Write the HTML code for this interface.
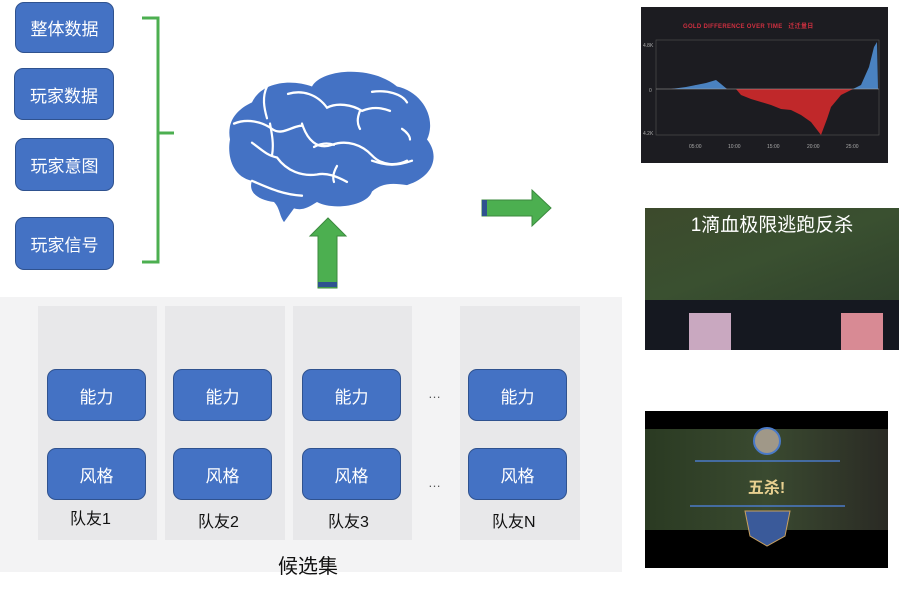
<!DOCTYPE html>
<html><head><meta charset="utf-8"><style>
body{margin:0;width:899px;height:590px;background:#fff;position:relative;overflow:hidden;font-family:"Liberation Sans","Noto Sans CJK SC",sans-serif}
.b{position:absolute;background:#4472c4;border:1px solid #2f528f;border-radius:9px;color:#fff;font-size:17px;display:flex;align-items:center;justify-content:center;box-sizing:border-box}
.col{position:absolute;top:306px;height:234px;background:#e8e8ea}
.lb{position:absolute;font-size:16px;color:#111}
.dots{position:absolute;font-size:13px;color:#555}
</style></head><body>
<div class="b" style="left:15px;top:2px;width:99px;height:51px">整体数据</div>
<div class="b" style="left:14px;top:68px;width:100px;height:52px">玩家数据</div>
<div class="b" style="left:15px;top:138px;width:99px;height:53px">玩家意图</div>
<div class="b" style="left:15px;top:217px;width:99px;height:53px">玩家信号</div>
<svg style="position:absolute;left:0;top:0" width="630" height="300">
<path d="M142 18 H158 V262 H142 M158 133 H174" fill="none" stroke="#4caf50" stroke-width="3"/>
<g transform="translate(222,60) scale(1,1.06)">
<path d="M30,40 C40,20 70,18 90,25 C100,8 150,5 175,25 C200,30 215,55 205,75 C218,90 212,110 185,118 C170,116 160,116 150,124 C145,138 110,142 95,134 C85,140 80,142 72,140 L62,153 C57,146 58,140 52,134 C35,132 26,124 30,114 C10,110 5,90 8,75 C5,60 12,48 30,40 Z" fill="#4472c4"/>
<g fill="none" stroke="#fff" stroke-width="2.2" stroke-linecap="round">
<path d="M45,25 C40,35 42,45 45,55"/>
<path d="M12,60 C25,55 40,58 50,65 C60,72 70,62 80,62"/>
<path d="M66,32 C80,28 95,32 105,45 C115,40 130,42 140,48 C150,44 160,45 168,48"/>
<path d="M138,48 C135,55 135,60 138,65"/>
<path d="M150,30 C165,28 180,32 185,40"/>
<path d="M80,60 C85,75 95,85 110,80 C125,75 140,80 150,90 C160,100 175,100 185,95"/>
<path d="M92,82 C100,78 106,78 112,80"/>
<path d="M30,78 C40,85 45,90 55,92 C65,105 80,110 95,108 C105,106 115,110 125,115"/>
<path d="M115,100 C112,105 110,110 112,115"/>
<path d="M180,65 C185,68 188,72 188,75"/>
<path d="M150,95 C165,100 175,100 190,95"/>
<path d="M30,114 C45,120 60,127 80,128"/>
<path d="M48,60 C50,70 52,80 50,90"/>
</g></g>
<path d="M318 288 V236 H310 L328 218 L346 236 H337 V288 Z" fill="#4caf50" stroke="#3b8a3e"/>
<rect x="318" y="282" width="19" height="5" fill="#2f528f"/>
</svg>
<svg style="position:absolute;left:480px;top:188px" width="75" height="40"><path d="M2 12 H52 V2 L71 20 L52 38 V28 H2 Z" fill="#4caf50" stroke="#3b8a3e"/><rect x="2" y="12" width="5" height="16" fill="#2f528f"/></svg>
<div style="position:absolute;left:0;top:297px;width:622px;height:275px;background:#f3f3f4"></div>
<div class="col" style="left:38px;width:119px"></div>
<div class="col" style="left:165px;width:120px"></div>
<div class="col" style="left:293px;width:119px"></div>
<div class="col" style="left:460px;width:120px"></div>
<div class="b" style="left:47px;top:369px;width:99px;height:52px">能力</div>
<div class="b" style="left:173px;top:369px;width:99px;height:52px">能力</div>
<div class="b" style="left:302px;top:369px;width:99px;height:52px">能力</div>
<div class="b" style="left:468px;top:369px;width:99px;height:52px">能力</div>
<div class="b" style="left:47px;top:448px;width:99px;height:52px">风格</div>
<div class="b" style="left:173px;top:448px;width:99px;height:52px">风格</div>
<div class="b" style="left:302px;top:448px;width:99px;height:52px">风格</div>
<div class="b" style="left:468px;top:448px;width:99px;height:52px">风格</div>
<div class="dots" style="left:428px;top:386px">…</div>
<div class="dots" style="left:428px;top:475px">…</div>
<div class="lb" style="left:70px;top:505px">队友1</div>
<div class="lb" style="left:198px;top:508px">队友2</div>
<div class="lb" style="left:328px;top:508px">队友3</div>
<div class="lb" style="left:492px;top:508px">队友N</div>
<div class="lb" style="left:278px;top:550px;font-size:20px">候选集</div>
<div style="position:absolute;left:641px;top:7px;width:247px;height:156px;background:#1c1c21">
<div style="position:absolute;left:42px;top:14px;font-size:6px;font-weight:bold;color:#d03040;letter-spacing:.3px">GOLD DIFFERENCE OVER TIME &nbsp;&nbsp;迁迁量日</div>
<svg style="position:absolute;left:0;top:0" width="247" height="156">
<rect x="15" y="33" width="223" height="95" fill="none" stroke="#555" stroke-width=".6"/>
<path d="M30 82 L45 81 L55 78 L65 79 L75 74 L80 78 L86 82 L95 82 L100 88 L110 92 L120 95 L130 98 L140 102 L150 103 L160 108 L170 115 L180 128 L186 112 L190 100 L200 88 L208 84 L212 82 Z" fill="#c0282a"/>
<path d="M30 82 L45 80 L55 78 L65 76 L75 73 L80 77 L86 82 Z M212 82 L220 78 L228 60 L233 40 L236 35 L237 82 Z" fill="#4a82c0"/>
<line x1="15" y1="82" x2="238" y2="82" stroke="#aaa" stroke-width=".5"/>
<g font-size="5" fill="#aaa" font-family="Liberation Sans"><text x="48" y="141">05:00</text><text x="87" y="141">10:00</text><text x="126" y="141">15:00</text><text x="166" y="141">20:00</text><text x="205" y="141">25:00</text><text x="2" y="40">4.8K</text><text x="8" y="85">0</text><text x="2" y="128">4.2K</text></g>
</svg></div>
<div style="position:absolute;left:645px;top:208px;width:254px;height:142px;background:linear-gradient(160deg,#3c4a2c,#3a5030 40%,#2a3a2a)">
<div style="position:absolute;left:0;top:92px;width:254px;height:50px;background:#151820"></div>
<div style="position:absolute;left:44px;top:105px;width:42px;height:37px;background:#c9a8c0"></div>
<div style="position:absolute;left:196px;top:105px;width:42px;height:37px;background:#d88a94"></div>
<div style="position:absolute;left:0;top:2px;width:254px;text-align:center;font-size:19px;color:#fff">1滴血极限逃跑反杀</div>
</div>
<div style="position:absolute;left:645px;top:411px;width:243px;height:157px;background:#000">
<div style="position:absolute;left:0;top:18px;width:243px;height:101px;background:linear-gradient(90deg,#2a3a22,#3a4a30 50%,#2a2a24)"></div>
<svg style="position:absolute;left:0;top:0" width="243" height="157"><circle cx="122" cy="30" r="13" fill="#a09888" stroke="#4a7ac8" stroke-width="2"/><path d="M50 50 H195 M45 95 H200" stroke="#4a7ac8" stroke-width="1.5"/><path d="M100 100 H145 L140 125 L122 135 L105 125 Z" fill="#3a5a9a" stroke="#c8a060"/></svg>
<div style="position:absolute;left:0;top:63px;width:243px;text-align:center;font-size:16px;color:#e8d090;font-weight:bold">五杀!</div>
</div>
</body></html>
